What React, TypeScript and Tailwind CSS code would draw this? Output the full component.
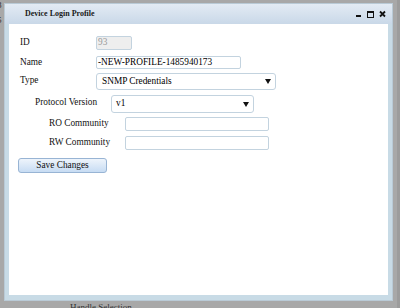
import React from "react";

const Arrow = () => (
  <svg width="6" height="5" viewBox="0 0 6 5" className="shrink-0">
    <path d="M0 0 H6 L3 5 Z" fill="#111" />
  </svg>
);

export default function App() {
  const serif = { fontFamily: '"Liberation Serif", "Times New Roman", serif' };
  return (
    <div
      className="relative w-[400px] h-[308px] overflow-hidden bg-[#a8a8a8]"
      style={serif}
    >
      {/* background fragments */}
      <span className="absolute left-[-3px] top-[1px] text-[9px] leading-none text-[#333]">8</span>
      <span className="absolute left-[-3px] top-[16px] text-[9px] leading-none text-[#333]">5</span>
      <span className="absolute left-[70px] top-[303px] text-[9px] leading-none text-[#333]">Handle Selection</span>
      <div className="absolute right-0 top-0 h-full w-[3px] bg-[#9c9c9c]" />

      {/* dialog window */}
      <div className="absolute left-[4px] top-[3px] w-[389px] h-[298px] flex flex-col border border-[#b9cad6] bg-[#c8dbe6]">
        <div className="h-[20px] flex items-center pl-[20px] pr-[5px] bg-gradient-to-b from-[#e3ebf4] to-[#c9d8e8]">
          <span className="text-[8px] font-bold text-[#1a1a1a] leading-none">Device Login Profile</span>
          <div className="ml-auto flex items-center gap-[5px] pr-[1px]">
            <svg width="6" height="8" viewBox="0 0 6 8">
              <rect x="0" y="5" width="5" height="2" fill="#111" />
            </svg>
            <svg width="7" height="8" viewBox="0 0 7 8">
              <rect x="0.5" y="1.5" width="6" height="6" fill="none" stroke="#111" strokeWidth="1" />
              <rect x="0" y="1" width="7" height="2" fill="#111" />
            </svg>
            <svg width="7" height="8" viewBox="0 0 7 8">
              <path d="M1 1.5 L6 6.5 M6 1.5 L1 6.5" stroke="#111" strokeWidth="1.8" />
            </svg>
          </div>
        </div>
        <div className="flex-1 mx-[4px] mb-[5px] bg-white flex flex-col pt-[12px] pl-[11px] text-[9.3px] text-[#111] leading-none">
          {/* ID */}
          <div className="flex items-center h-[14px]">
            <span className="w-[76px]">ID</span>
            <div className="w-[36px] h-[14px] border border-[#c3d3df] rounded-[2px] bg-[#eeeeee] flex items-center pl-[1px] text-[#9a9a9a]">
              93
            </div>
          </div>
          {/* Name */}
          <div className="flex items-center h-[13px] mt-[6px]">
            <span className="w-[76px]">Name</span>
            <div className="w-[145px] h-[13px] border border-[#c3d3df] rounded-[2px] bg-white flex items-center pl-[1px] text-black">
              -NEW-PROFILE-1485940173
            </div>
          </div>
          {/* Type */}
          <div className="flex items-center h-[17px] mt-[4px]">
            <span className="w-[76px] -mt-[2px]">Type</span>
            <div className="w-[180px] h-[17px] border border-[#c3d3df] rounded-[3px] bg-white flex items-center pl-[5px] pr-[4px] text-black">
              <span>SNMP Credentials</span>
              <span className="ml-auto"><Arrow /></span>
            </div>
          </div>
          {/* Protocol Version */}
          <div className="flex items-center h-[18px] mt-[5px] pl-[15px]">
            <span className="w-[76px] -mt-[2px]">Protocol Version</span>
            <div className="w-[143px] h-[18px] border border-[#c3d3df] rounded-[3px] bg-white flex items-center pl-[4px] pr-[4px] text-black">
              <span>v1</span>
              <span className="ml-auto"><Arrow /></span>
            </div>
          </div>
          {/* RO */}
          <div className="flex items-center h-[14px] mt-[4px] pl-[29px]">
            <span className="w-[76px] -mt-[1px]">RO Community</span>
            <div className="w-[144px] h-[14px] border border-[#c3d3df] rounded-[2px] bg-white" />
          </div>
          {/* RW */}
          <div className="flex items-center h-[14px] mt-[5px] pl-[29px]">
            <span className="w-[76px] -mt-[1px]">RW Community</span>
            <div className="w-[144px] h-[14px] border border-[#c3d3df] rounded-[2px] bg-white" />
          </div>
          {/* Save */}
          <div className="mt-[8px] -ml-[2px]">
            <button className="w-[89px] h-[15px] border border-[#98b4d4] rounded-[3px] bg-gradient-to-b from-[#eef4fb] to-[#c7dcf3] text-[9.3px] leading-none text-[#111] flex items-center justify-center">
              Save Changes
            </button>
          </div>
        </div>
      </div>
    </div>
  );
}
